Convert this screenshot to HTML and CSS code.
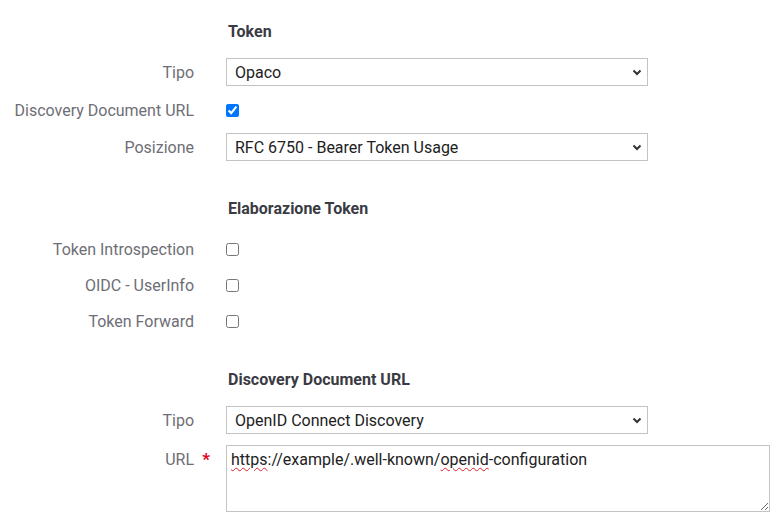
FILE: index.html
```html
<!DOCTYPE html>
<html lang="it">
<head>
<meta charset="utf-8">
<title>Token</title>
<link rel="stylesheet" href="styles.css">
</head>
<body>
<div class="form">
  <section class="section">
    <h3 class="heading">Token</h3>
    <div class="row">
      <label class="label">Tipo</label>
      <select class="select"><option>Opaco</option></select>
    </div>
    <div class="row row-check row-check-first">
      <label class="label">Discovery Document URL</label>
      <input class="check" type="checkbox" checked>
    </div>
    <div class="row">
      <label class="label">Posizione</label>
      <select class="select"><option>RFC 6750 - Bearer Token Usage</option></select>
    </div>
  </section>

  <section class="section section-2">
    <h3 class="heading">Elaborazione Token</h3>
    <div class="row row-check">
      <label class="label">Token Introspection</label>
      <input class="check" type="checkbox">
    </div>
    <div class="row row-check">
      <label class="label">OIDC - UserInfo</label>
      <input class="check" type="checkbox">
    </div>
    <div class="row row-check">
      <label class="label">Token Forward</label>
      <input class="check" type="checkbox">
    </div>
  </section>

  <section class="section section-3">
    <h3 class="heading">Discovery Document URL</h3>
    <div class="row">
      <label class="label">Tipo</label>
      <select class="select"><option>OpenID Connect Discovery</option></select>
    </div>
    <div class="row row-top">
      <label class="label label-req">URL<span class="req">*</span></label>
      <div class="textarea"><span class="typo">https</span>://example/.well-known/<span class="typo">openid</span>-configuration</div>
    </div>
  </section>
</div>
</body>
</html>
```

FILE: styles.css
```css
* { box-sizing: border-box; }
html, body { margin: 0; padding: 0; background: #fff; }
body {
  font-family: Roboto, "Liberation Sans", sans-serif;
  font-size: 16px;
  color: #222;
}
.form { padding-top: 22px; }
.section { display: flex; flex-direction: column; gap: 8px; }
.section-2 { margin-top: 38px; }
.section-3 { margin-top: 35px; }
.heading {
  margin: 0 0 8px 228px;
  font-size: 16px;
  line-height: 20px;
  font-weight: 700;
  color: #3b3b43;
}
.row {
  display: grid;
  grid-template-columns: 194px auto;
  column-gap: 32px;
  align-items: center;
  min-height: 28px;
  justify-content: start;
}
.row-check { height: 28px; }
.row-check-first { height: 31px; }
.row-top { align-items: start; margin-top: 3px; }
.label {
  text-align: right;
  font-size: 16px;
  line-height: 26px;
  padding-top: 2px;
  color: #6e6e76;
  white-space: nowrap;
}
.label-req { position: relative; }
.req {
  position: absolute;
  right: -16px;
  top: 1px;
  color: #e3001b;
  font-size: 17px;
  font-weight: 700;
}
.select {
  appearance: none;
  -webkit-appearance: none;
  width: 422px;
  height: 28px;
  border: 1px solid #c3c3c3;
  border-radius: 0;
  background: #fff url("data:image/svg+xml;utf8,<svg xmlns='http://www.w3.org/2000/svg' width='10' height='7' viewBox='0 0 10 7'><path d='M1.5 1.5 L5 5 L8.5 1.5' fill='none' stroke='%23333' stroke-width='2'/></svg>") no-repeat right 5px center;
  padding: 0 24px 0 8px;
  font-family: Roboto, "Liberation Sans", sans-serif;
  font-size: 16px;
  color: #222;
  margin: 0;
}
.check {
  width: 13px;
  height: 13px;
  margin: 1px 0 0 0;
  accent-color: #0075ff;
}
.textarea {
  width: 544px;
  height: 67px;
  border: 1px solid #c3c3c3;
  padding: 4px 4px;
  font-size: 16px;
  line-height: 20px;
  color: #222;
  resize: vertical;
  overflow: auto;
}
.typo {
  text-decoration: underline wavy #e0202c;
  text-decoration-thickness: 1px;
  text-underline-offset: 2px;
}
```
